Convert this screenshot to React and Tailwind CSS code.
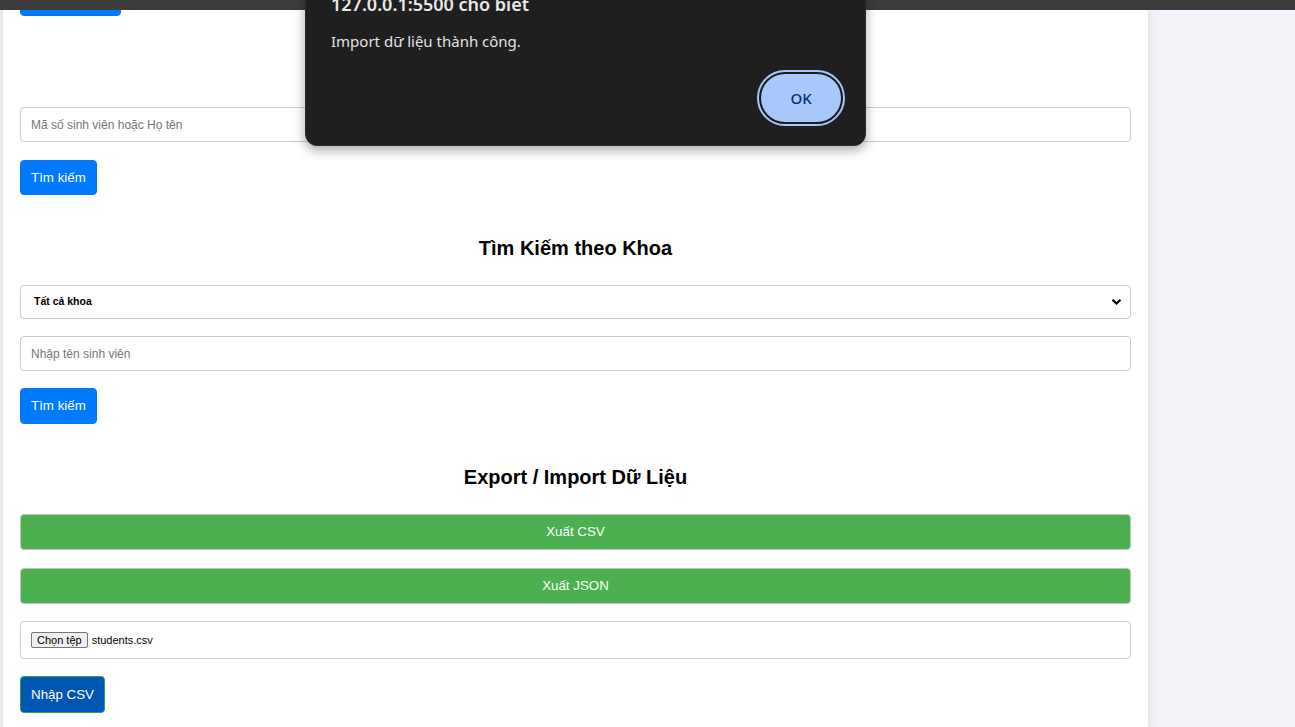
import React from 'react';

const page = { fontFamily: '"Liberation Sans", Arial, sans-serif' };
const dialogFont = { fontFamily: '"Noto Sans", "Open Sans", sans-serif' };

function Heading({ children, className = '' }) {
  return (
    <h3 className={`text-center text-[20px] leading-[22px] font-bold text-black ${className}`}>
      {children}
    </h3>
  );
}

function TextInput({ placeholder, className = '' }) {
  return (
    <input
      type="text"
      placeholder={placeholder}
      className={`block w-full h-[35px] px-[10px] border border-[#cccccc] rounded-[4px] bg-white text-[12px] text-black placeholder:text-[#757575] outline-none ${className}`}
    />
  );
}

function BlueButton({ children, className = '' }) {
  return (
    <button className={`block h-[35px] px-[10px] bg-[#007bff] border border-[#0a74e6] rounded-[4px] text-white text-[13.33px] ${className}`}>
      {children}
    </button>
  );
}

function GreenButton({ children, className = '' }) {
  return (
    <button className={`block w-full h-[36px] bg-[#4caf50] border border-[#c4c4c4] rounded-[4px] text-white text-[13.33px] ${className}`}>
      {children}
    </button>
  );
}

export default function App() {
  return (
    <div className="relative w-[1295px] h-[727px] overflow-hidden bg-[#f3f2f8]" style={page}>
      {/* browser strip */}
      <div className="relative z-10 h-[10px] w-full bg-[#3c3c3c]" />

      <div className="flex">
        <div className="ml-[3px] w-[1145px] h-[717px] overflow-hidden bg-white shadow-[0_0_8px_rgba(0,0,0,0.12)] px-[17px]">
          <BlueButton className="-mt-[29px] w-[101px]">Thêm</BlueButton>

          <Heading className="mt-[42px]">Tìm Kiếm Sinh Viên</Heading>
          <TextInput className="mt-[27px]" placeholder="Mã số sinh viên hoặc Họ tên" />
          <BlueButton className="mt-[18px]">Tìm kiếm</BlueButton>

          <Heading className="mt-[42px]">Tìm Kiếm theo Khoa</Heading>
          <div className="mt-[26px] h-[34px] flex items-center justify-between border border-[#cccccc] rounded-[4px] pl-[13px] pr-[8px]">
            <span className="text-[10.5px] font-bold text-black">Tất cả khoa</span>
            <svg width="11" height="8" viewBox="0 0 11 8">
              <path d="M1.5 1.8 L5.5 5.6 L9.5 1.8" fill="none" stroke="#000" strokeWidth="2.2" />
            </svg>
          </div>
          <TextInput className="mt-[17px]" placeholder="Nhập tên sinh viên" />
          <BlueButton className="mt-[17px] h-[36px]">Tìm kiếm</BlueButton>

          <Heading className="mt-[42px]">Export / Import Dữ Liệu</Heading>
          <GreenButton className="mt-[26px]">Xuất CSV</GreenButton>
          <GreenButton className="mt-[18px]">Xuất JSON</GreenButton>
          <div className="mt-[17px] h-[38px] flex items-center gap-[4px] border border-[#cccccc] rounded-[4px] px-[10px]">
            <span className="h-[16px] px-[5px] flex items-center bg-[#efefef] border border-[#767676] rounded-[2px] text-[11px] leading-none text-black">
              Chọn tệp
            </span>
            <span className="text-[11px] text-black">students.csv</span>
          </div>
          <button className="block mt-[17px] h-[37px] px-[10px] bg-[#0056b3] border border-[#28a745] rounded-[4px] text-white text-[13.33px]">
            Nhập CSV
          </button>
        </div>
      </div>

      {/* alert dialog */}
      <div
        className="absolute z-20 left-[305px] top-[-20px] w-[561px] h-[166px] bg-[#1f1f1f] rounded-[12px] shadow-[0_4px_12px_rgba(0,0,0,0.35)] border border-[#2c2c2c] pl-[25px] pr-[20px] pt-[12px] flex flex-col"
        style={dialogFont}
      >
        <div className="text-[18px] leading-[22px] font-semibold text-[#e8e8e8]">127.0.0.1:5500 cho biết</div>
        <div className="mt-[15px] text-[15px] leading-[22px] text-[#e3e3e3]">Import dữ liệu thành công.</div>
        <div className="mt-[18px] flex justify-end">
          <div className="rounded-full border-2 border-[#a8c7fa] p-[2px] bg-[#1b1b1b]">
            <button className="w-[80px] h-[48px] rounded-full bg-[#a8c7fa] text-[#062e6f] text-[15px] font-medium">
              OK
            </button>
          </div>
        </div>
      </div>
    </div>
  );
}
